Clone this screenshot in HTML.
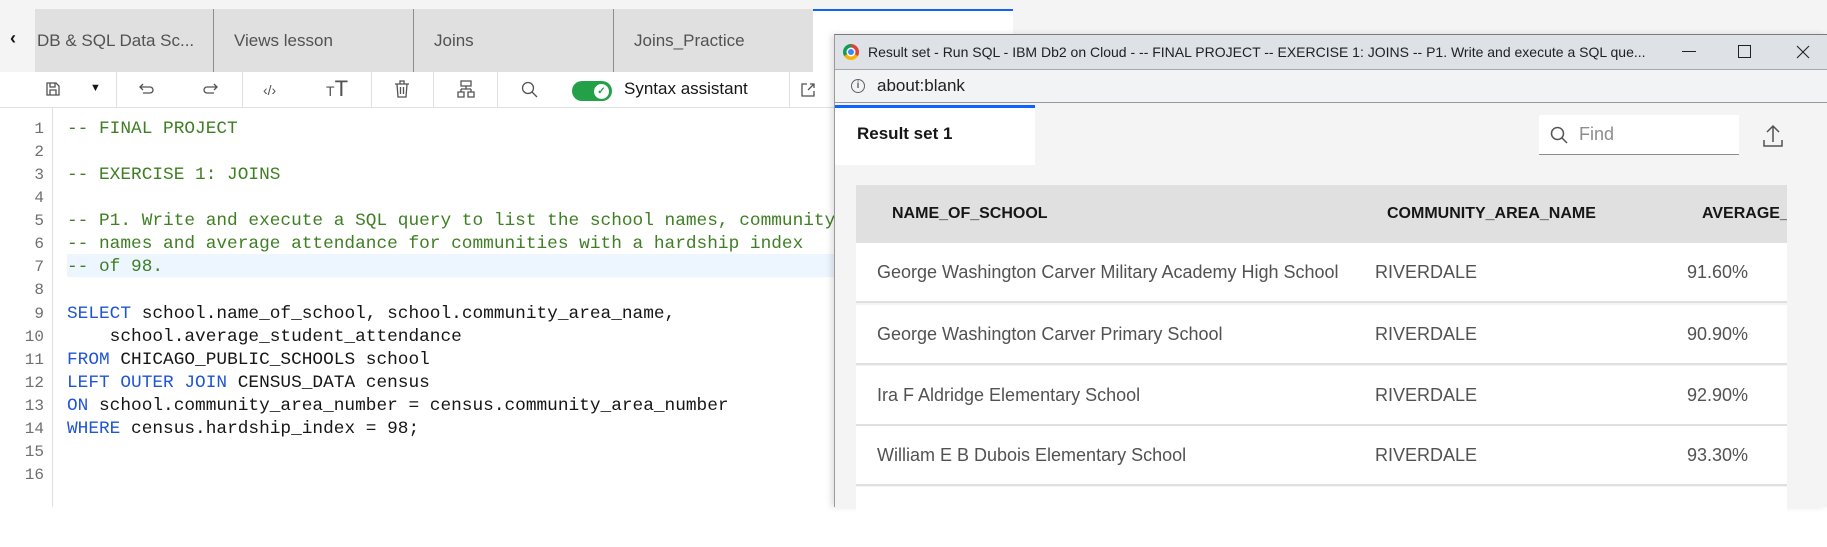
<!DOCTYPE html>
<html><head><meta charset="utf-8"><style>
*{margin:0;padding:0;box-sizing:border-box}
body{width:1827px;height:507px;overflow:hidden;background:#fff;font-family:"Liberation Sans",sans-serif;position:relative}
.a{position:absolute}
.tab{position:absolute;top:9px;height:63px;background:#e0e0e0;color:#525252;font-size:17px;line-height:63px;border-right:1px solid #8d8d8d;overflow:hidden;white-space:nowrap}
.ln{position:absolute;left:0;width:44px;text-align:right;color:#6f6f6f;font-family:"Liberation Mono",monospace;font-size:16px}
.code{position:absolute;left:67px;font-family:"Liberation Mono",monospace;font-size:17.8px;white-space:pre;color:#161616}
.c{color:#3f7f24}.k{color:#1f55d6}
.ic{position:absolute;top:80px;color:#525252;font-size:17px}
.dv{position:absolute;top:72px;width:1px;height:36px;background:#e0e0e0}
.row{position:absolute;left:856px;width:931px;height:60px;background:#fff;border-bottom:2px solid #e0e0e0;font-size:18px;color:#525252;line-height:58px}
.row span{position:absolute}
</style></head><body>
<div class="a" style="left:0;top:0;width:1827px;height:72px;background:#f4f4f4"></div>
<div class="a" style="left:10px;top:28px;font-size:18px;font-weight:bold;color:#161616">‹</div>
<div class="tab" style="left:35px;width:179px;padding-left:2px">DB &amp; SQL Data Sc...</div>
<div class="tab" style="left:214px;width:200px;padding-left:20px">Views lesson</div>
<div class="tab" style="left:414px;width:200px;padding-left:20px">Joins</div>
<div class="tab" style="left:614px;width:199px;padding-left:20px;border-right:none">Joins_Practice</div>
<div class="a" style="left:813px;top:9px;width:200px;height:63px;background:#fff;border-top:2px solid #0f62fe"></div>
<!-- toolbar -->
<div class="a" style="left:0;top:72px;width:835px;height:36px;background:#fff;border-bottom:1px solid #e0e0e0"></div>
<div class="dv" style="left:116px"></div><div class="dv" style="left:242px"></div><div class="dv" style="left:371px"></div><div class="dv" style="left:433px"></div><div class="dv" style="left:497px"></div><div class="dv" style="left:789px"></div>
<svg class="a" style="left:45px;top:81px" width="16" height="16" viewBox="0 0 16 16" fill="none" stroke="#525252" stroke-width="1.3"><path d="M2 2h9l3 3v9H2z M5 2v4h5V2 M5 14v-5h6v5"/></svg>
<div class="a" style="left:90px;top:82px;font-size:11px;color:#161616">▼</div>
<svg class="a" style="left:138px;top:82px" width="18" height="14" viewBox="0 0 18 14" fill="none" stroke="#525252" stroke-width="1.3"><path d="M5 2L2 5l3 3 M2 5h10a3 3 0 010 6H5"/></svg>
<svg class="a" style="left:201px;top:82px" width="18" height="14" viewBox="0 0 18 14" fill="none" stroke="#525252" stroke-width="1.3"><path d="M13 2l3 3-3 3 M16 5H6a3 3 0 000 6h7"/></svg>
<div class="ic" style="left:263px;font-size:14px;top:82px">‹/›</div>
<div class="ic" style="left:326px;top:76px"><span style="font-size:14px">T</span><span style="font-size:22px">T</span></div>
<svg class="a" style="left:394px;top:80px" width="16" height="18" viewBox="0 0 16 18" fill="none" stroke="#525252" stroke-width="1.3"><path d="M1 4h14 M6 4V1h4v3 M3 4l1 13h8l1-13 M6.5 7v7 M9.5 7v7"/></svg>
<svg class="a" style="left:457px;top:80px" width="18" height="18" viewBox="0 0 18 18" fill="none" stroke="#525252" stroke-width="1.3"><path d="M4 1h10v5H4z M9 6v3 M4 9h10 M4 9v3 M14 9v3 M1 12h6v5H1z M11 12h6v5h-6z"/></svg>
<svg class="a" style="left:521px;top:81px" width="17" height="17" viewBox="0 0 17 17" fill="none" stroke="#525252" stroke-width="1.3"><circle cx="7" cy="7" r="5.5"/><path d="M11 11l5 5"/></svg>
<div class="a" style="left:572px;top:81px;width:40px;height:20px;border-radius:10px;background:#24a148"></div>
<div class="a" style="left:594px;top:84px;width:15px;height:15px;border-radius:50%;background:#fff;color:#24a148;font-size:10px;text-align:center;line-height:15px;font-weight:bold">✓</div>
<div class="a" style="left:624px;top:79px;font-size:17px;color:#161616">Syntax assistant</div>
<svg class="a" style="left:800px;top:82px" width="16" height="16" viewBox="0 0 16 16" fill="none" stroke="#525252" stroke-width="1.3"><path d="M7 2H2v12h12V9 M10 2h4v4 M14 2L8 8"/></svg>
<!-- editor -->
<div class="a" style="left:52px;top:108px;width:1px;height:399px;background:#e0e0e0"></div>
<div class="a" style="left:67px;top:254px;width:768px;height:23px;background:#edf5ff"></div>
<div class="ln" style="top:118px;line-height:23.07px">1<br>2<br>3<br>4<br>5<br>6<br>7<br>8<br>9<br>10<br>11<br>12<br>13<br>14<br>15<br>16</div>
<div class="code" style="top:118px;line-height:23.07px"><span class="c">-- FINAL PROJECT</span>

<span class="c">-- EXERCISE 1: JOINS</span>

<span class="c">-- P1. Write and execute a SQL query to list the school names, community</span>
<span class="c">-- names and average attendance for communities with a hardship index</span>
<span class="c">-- of 98.</span>

<span class="k">SELECT</span> school.name_of_school, school.community_area_name,
    school.average_student_attendance
<span class="k">FROM</span> CHICAGO_PUBLIC_SCHOOLS school
<span class="k">LEFT OUTER JOIN</span> CENSUS_DATA census
<span class="k">ON</span> school.community_area_number = census.community_area_number
<span class="k">WHERE</span> census.hardship_index = 98;
</div>
<!-- popup window -->
<div class="a" style="left:834px;top:34px;width:993px;height:473px;background:#f4f4f4;border-left:1px solid #9a9a9a;border-top:1px solid #7a7a7a;box-shadow:-3px 0 6px rgba(0,0,0,.12)"></div>
<div class="a" style="left:835px;top:35px;width:992px;height:35px;background:#dee1e6;border-bottom:1px solid #a8a8a8"></div>
<div class="a" style="left:843px;top:44px;width:16px;height:16px;border-radius:50%;background:conic-gradient(#db4437 0 120deg,#f4b400 120deg 240deg,#0f9d58 240deg 360deg)"></div>
<div class="a" style="left:848px;top:49px;width:6px;height:6px;border-radius:50%;background:#4285f4;box-shadow:0 0 0 1.5px #fff"></div>
<div class="a" style="left:868px;top:44px;font-size:14px;color:#202124;white-space:nowrap">Result set - Run SQL - IBM Db2 on Cloud - -- FINAL PROJECT -- EXERCISE 1: JOINS -- P1. Write and execute a SQL que...</div>
<div class="a" style="left:1682px;top:51px;width:14px;height:1px;background:#202124"></div>
<div class="a" style="left:1738px;top:45px;width:13px;height:13px;border:1px solid #202124"></div>
<svg class="a" style="left:1796px;top:45px" width="14" height="14" viewBox="0 0 14 14" stroke="#202124" stroke-width="1.1"><path d="M1 1l12 12M13 1L1 13"/></svg>
<div class="a" style="left:835px;top:70px;width:992px;height:33px;background:#f1f3f4;border-bottom:1px solid #9a9a9a"></div>
<div class="a" style="left:851px;top:79px;width:14px;height:14px;border-radius:50%;border:1.3px solid #5f6368;font-size:10px;text-align:center;line-height:12px;color:#5f6368;font-weight:bold">i</div>
<div class="a" style="left:877px;top:76px;font-size:17px;color:#202124">about:blank</div>
<div class="a" style="left:835px;top:105px;width:200px;height:60px;background:#fff;border-top:3px solid #0f62fe"></div>
<div class="a" style="left:857px;top:124px;font-size:17px;font-weight:bold;color:#161616">Result set 1</div>
<div class="a" style="left:1539px;top:115px;width:200px;height:40px;background:#fff;border-bottom:1px solid #8d8d8d"></div>
<svg class="a" style="left:1550px;top:126px" width="18" height="18" viewBox="0 0 18 18" fill="none" stroke="#525252" stroke-width="1.5"><circle cx="7.5" cy="7.5" r="6"/><path d="M12 12l5 5"/></svg>
<div class="a" style="left:1579px;top:124px;font-size:18px;color:#8d8d8d">Find</div>
<svg class="a" style="left:1762px;top:124px" width="22" height="24" viewBox="0 0 22 24" fill="none" stroke="#525252" stroke-width="1.5"><path d="M11 18V2 M5 8l6-6 6 6 M2 16v6h18v-6"/></svg>
<div class="a" style="left:856px;top:185px;width:931px;height:58px;background:#e0e0e0;font-size:16px;font-weight:bold;color:#161616;line-height:58px">
<span class="a" style="left:36px">NAME_OF_SCHOOL</span><span class="a" style="left:531px">COMMUNITY_AREA_NAME</span><span class="a" style="left:846px;white-space:nowrap;width:85px;overflow:hidden">AVERAGE_STUDENT</span></div>
<div class="row" style="top:243px"><span style="left:21px">George Washington Carver Military Academy High School</span><span style="left:519px">RIVERDALE</span><span style="left:831px">91.60%</span></div>
<div class="row" style="top:305px"><span style="left:21px">George Washington Carver Primary School</span><span style="left:519px">RIVERDALE</span><span style="left:831px">90.90%</span></div>
<div class="row" style="top:366px"><span style="left:21px">Ira F Aldridge Elementary School</span><span style="left:519px">RIVERDALE</span><span style="left:831px">92.90%</span></div>
<div class="row" style="top:426px"><span style="left:21px">William E B Dubois Elementary School</span><span style="left:519px">RIVERDALE</span><span style="left:831px">93.30%</span></div>
<div class="row" style="top:487px;border:none"></div>
</body></html>
